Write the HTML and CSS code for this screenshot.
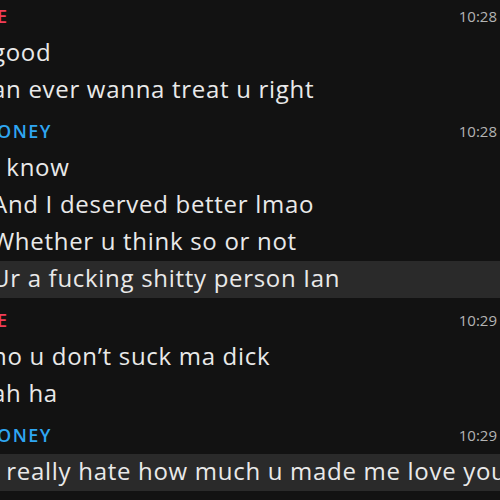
FILE: index.html
```html
<!DOCTYPE html>
<html>
<head>
    <title>Chat</title>
    <link rel="stylesheet" href="styles.css">
</head>
<body>
    <div class="chat">
        <div class="group">
            <div class="sender">
                <span class="name me">ME</span>
                <span class="time">10:28</span>
            </div>
            <div class="msg">good</div>
            <div class="msg">an ever wanna treat u right</div>
        </div>
        <div class="group">
            <div class="sender">
                <span class="name them">HONEY</span>
                <span class="time">10:28</span>
            </div>
            <div class="msg">I know</div>
            <div class="msg">And I deserved better lmao</div>
            <div class="msg">Whether u think so or not</div>
            <div class="msg saved">Ur a fucking shitty person Ian</div>
        </div>
        <div class="group">
            <div class="sender">
                <span class="name me">ME</span>
                <span class="time">10:29</span>
            </div>
            <div class="msg">no u don’t suck ma dick</div>
            <div class="msg">ah ha</div>
        </div>
        <div class="group">
            <div class="sender">
                <span class="name them">HONEY</span>
                <span class="time">10:29</span>
            </div>
            <div class="msg saved">I really hate how much u made me love you</div>
        </div>
    </div>
</body>
</html>
```

FILE: styles.css
```css
body {
    margin: 0;
    background-color: #121212;
    color: #e9e9e9;
    font-family: 'Open Sans', 'Lato', sans-serif;
    overflow: hidden;
    height: 500px;
}
.chat {
    margin-top: -6px;
}
.sender {
    height: 41px;
    display: flex;
    justify-content: space-between;
    align-items: flex-end;
    padding-right: 3px;
    box-sizing: border-box;
    padding-bottom: 9px;
}
.name {
    font-size: 18px;
    font-weight: 600;
    letter-spacing: 1.5px;
    line-height: 20px;
    margin-left: -21px;
}
.name.them {
    margin-left: -18px;
}
.me {
    color: #f23c57;
}
.them {
    color: #2fa6f2;
}
.time {
    font-size: 15px;
    color: #b4b4b4;
    line-height: 20px;
}
.msg {
    height: 37px;
    line-height: 34px;
    font-size: 24px;
    letter-spacing: 0.7px;
    white-space: nowrap;
    margin-left: -8px;
}
.saved {
    background-color: #2a2a2a;
}
```
